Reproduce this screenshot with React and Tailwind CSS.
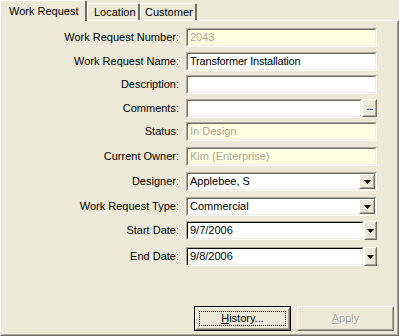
import React from 'react';

const font = { fontFamily: '"Liberation Sans", Arial, sans-serif' };

const Arrow = () => (
  <svg width="7" height="4" viewBox="0 0 7 4">
    <polygon points="0,0 7,0 3.5,4" fill="#000" />
  </svg>
);

// raised classic button box
const Raised = ({ className = '', children }) => (
  <div className={`border border-t-white border-l-white border-r-[#716f64] border-b-[#716f64] bg-[#ece9d8] ${className}`}>
    <div className="w-full h-full border border-t-[#ece9d8] border-l-[#ece9d8] border-r-[#aca899] border-b-[#aca899] flex items-center justify-center">
      {children}
    </div>
  </div>
);

// sunken classic text box
const Sunken = ({ className = '', bg = 'bg-white', dark = false, children }) => (
  <div className={`border border-t-[#aca899] border-l-[#aca899] border-r-white border-b-white ${className}`}>
    <div className={`w-full h-full border ${dark ? 'border-t-black border-l-black' : 'border-t-[#716f64] border-l-[#716f64]'} border-r-[#f1efe2] border-b-[#f1efe2] ${bg} flex items-center pl-[2px] overflow-hidden whitespace-nowrap`}>
      {children}
    </div>
  </div>
);

const Row = ({ label, mt, children }) => (
  <div className={`flex items-center h-[19px] ${mt}`}>
    <div className="w-[178px] text-right text-[11px] text-black pr-[1px]">{label}</div>
    <div className="ml-[6px] w-[191px] h-full flex">{children}</div>
  </div>
);

export default function App() {
  return (
    <div className="w-[399px] h-[336px] bg-[#ece9d8] flex flex-col overflow-hidden" style={font}>
      {/* tabs */}
      <div className="flex items-end h-[20px] relative z-10">
        <div className="h-[21px] w-[87px] border-t border-l border-t-white border-l-white border-r-2 border-r-[#716f64] rounded-tl-[2px] rounded-tr-[2px] bg-[#ece9d8] pl-[8px] pt-[2px] text-[11px] text-black -mb-[1px]">
          Work Request
        </div>
        <div className="h-[17px] w-[53px] border-t border-l border-t-white border-l-white border-r-2 border-r-[#716f64] rounded-tl-[2px] rounded-tr-[2px] pl-[6px] text-[11px] text-black leading-[16px]">
          Location
        </div>
        <div className="h-[17px] w-[57px] border-t border-l border-t-white border-l-white border-r-2 border-r-[#716f64] rounded-tl-[2px] rounded-tr-[2px] pl-[4px] text-[11px] text-black leading-[16px]">
          Customer
        </div>
      </div>

      {/* panel */}
      <div className="flex-1 border border-t-white border-l-white border-r-[#716f64] border-b-[#716f64]">
        <div className="w-full h-full border border-t-[#ece9d8] border-l-[#ece9d8] border-r-[#aca899] border-b-[#aca899] flex flex-col">
          <Row label="Work Request Number:" mt="mt-[6px]">
            <Sunken className="w-full" bg="bg-[#ffffe1]">
              <span className="text-[11px] text-[#aca899]">2043</span>
            </Sunken>
          </Row>
          <Row label="Work Request Name:" mt="mt-[5px]">
            <Sunken className="w-full">
              <span className="text-[11px] text-black tracking-[-0.2px]">Transformer Installation</span>
            </Sunken>
          </Row>
          <Row label="Description:" mt="mt-[4px]">
            <Sunken className="w-full" />
          </Row>
          <Row label="Comments:" mt="mt-[5px]">
            <Sunken className="w-[176px]" />
            <Raised className="w-[15px] h-[18px]">
              <span className="text-[11px] leading-none -mt-[3px] tracking-[-1px]">...</span>
            </Raised>
          </Row>
          <Row label="Status:" mt="mt-[4px]">
            <Sunken className="w-full" bg="bg-[#ffffe1]">
              <span className="text-[11px] text-[#aca899]">In Design</span>
            </Sunken>
          </Row>
          <Row label="Current Owner:" mt="mt-[6px]">
            <Sunken className="w-full" bg="bg-[#ffffe1]">
              <span className="text-[11px] text-[#aca899]">Kim (Enterprise)</span>
            </Sunken>
          </Row>
          <Row label="Designer:" mt="mt-[6px]">
            <Sunken className="w-full">
              <span className="flex-1 text-[11px] text-black">Applebee, S</span>
              <Raised className="w-[16px] h-[15px] shrink-0">
                <Arrow />
              </Raised>
            </Sunken>
          </Row>
          <Row label="Work Request Type:" mt="mt-[6px]">
            <Sunken className="w-full">
              <span className="flex-1 text-[11px] text-black">Commercial</span>
              <Raised className="w-[16px] h-[15px] shrink-0">
                <Arrow />
              </Raised>
            </Sunken>
          </Row>
          <Row label="Start Date:" mt="mt-[5px]">
            <Sunken className="w-[178px] h-[19px]" dark>
              <span className="text-[11px] text-black">9/7/2006</span>
            </Sunken>
            <Raised className="w-[13px] h-[19px]">
              <Arrow />
            </Raised>
          </Row>
          <Row label="End Date:" mt="mt-[7px]">
            <Sunken className="w-[178px] h-[19px]" dark>
              <span className="text-[11px] text-black">9/8/2006</span>
            </Sunken>
            <Raised className="w-[13px] h-[19px]">
              <Arrow />
            </Raised>
          </Row>

          <div className="flex-1" />

          {/* buttons */}
          <div className="flex justify-end gap-[6px] pr-[3px] mb-[3px]">
            <div className="w-[97px] h-[25px] border border-black">
              <Raised className="w-full h-full">
                <div className="w-[87px] h-[15px] border border-dotted border-black flex items-center justify-center text-[11px] text-black">
                  <span><span className="underline">H</span>istory...</span>
                </div>
              </Raised>
            </div>
            <Raised className="w-[97px] h-[25px]">
              <span className="text-[11px] text-[#aca899] [text-shadow:1px_1px_0_#fff]">
                <span className="underline">A</span>pply
              </span>
            </Raised>
          </div>
        </div>
      </div>
    </div>
  );
}
